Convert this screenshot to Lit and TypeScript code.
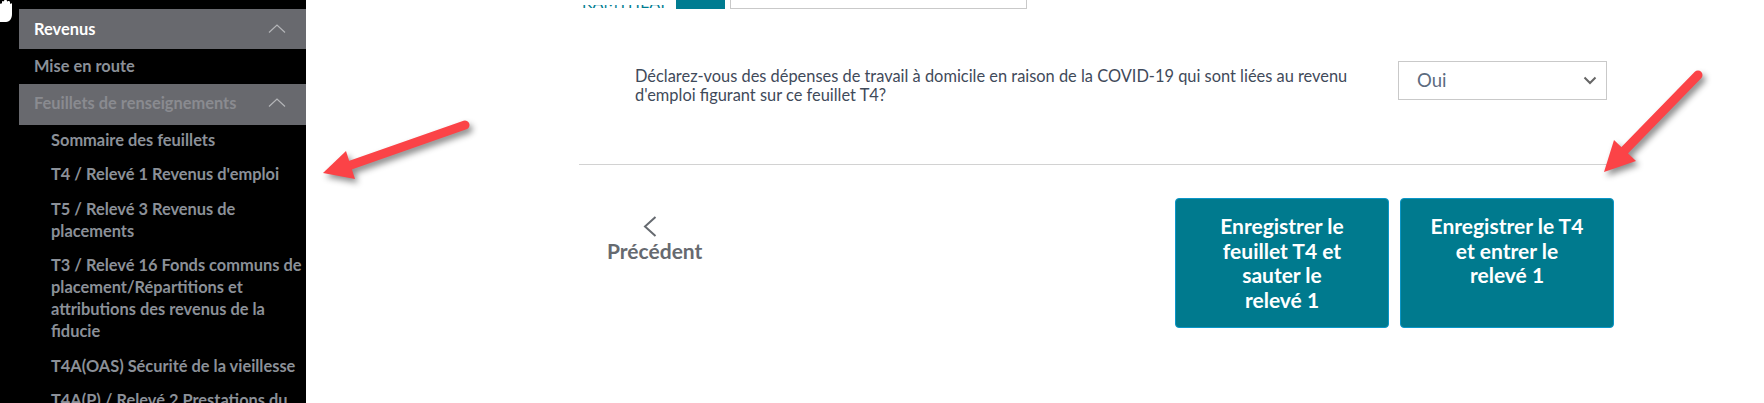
import { LitElement, html, css, svg } from "lit";
import { customElement } from "lit/decorators.js";

@customElement("app-root")
export class AppRoot extends LitElement {
  static styles = css`
    :host {
      display: block;
      position: relative;
      width: 1764px;
      height: 403px;
      overflow: hidden;
      background: #fff;
      font-family: "Lato", "Noto Sans", "Liberation Sans", sans-serif;
    }
    .page { display: flex; height: 403px; }
    .sidebar {
      width: 306px;
      flex: none;
      background: #000;
      padding-top: 9px;
      box-sizing: border-box;
      overflow: hidden;
      font-size: 16.4px;
      font-weight: 700;
      color: #8b9098;
    }
    .head {
      margin-left: 19px;
      height: 40px;
      box-sizing: border-box;
      background: #68696e;
      display: flex;
      align-items: center;
      justify-content: space-between;
      padding: 0 20px 2px 15px;
    }
    .head.first { color: #fff; }
    .head.sub { height: 41px; color: #8a8b90; padding-bottom: 4px; }
    .head svg { display: block; }
    .top { height: 35px; box-sizing: border-box; padding: 0 0 3px 34px; display: flex; align-items: center; }
    .item { padding: 3.5px 0 9px 51px; line-height: 22px; }
    .main { flex: 1; padding-left: 273px; padding-right: 157px; box-sizing: border-box; }
    .crumb { height: 9px; display: flex; align-items: flex-end; overflow: hidden; }
    .crumb .lbl { width: 97px; padding-left: 3px; font-size: 15.500px; line-height: 14px; color: #007c91; height: 4px; overflow: hidden; display: flex; align-items: flex-end; box-sizing: border-box; letter-spacing: 0.4px; }
    .crumb .teal { width: 49px; height: 9px; background: #007c91; }
    .crumb .input { width: 297px; height: 20px; margin-left: 5px; border: 1.5px solid #c9c9c9; box-sizing: border-box; background: #fff; }
    .question { display: flex; justify-content: space-between; margin-top: 52px; padding-left: 56px; }
    .qtext { width: 720px; font-size: 16.4px; line-height: 19px; color: #3f4a5a; padding-top: 5px; }
    .select {
      width: 209px; height: 39px; box-sizing: border-box;
      border: 1px solid #c9c9c9; display: flex; align-items: center; justify-content: space-between;
      padding: 0 9px 2px 18px; font-size: 18.500px; color: #5c6b80;
    }
    .select svg { margin-top: 2px; }
    .rule { height: 1px; background: #d2d2d2; margin-top: 60px; }
    .actions { display: flex; align-items: flex-start; margin-top: 33px; margin-right: -7px; }
    .prev { width: 596px; padding-left: 28px; box-sizing: border-box; display: flex; flex-direction: column; align-items: flex-start; font-size: 21px; font-weight: 700; color: #666a70; }
    .prev svg { display: block; margin: 18px 0 1px 36px; }
    .btn {
      width: 214px; height: 130px; box-sizing: border-box;
      background: #007a8e; border: 1px solid #0a96c8; border-radius: 4px;
      color: #fff; font-size: 21px; font-weight: 700; line-height: 24.6px; text-align: center;
      padding: 15px 20px 0;
    }
    .btn + .btn { margin-left: 11px; }
    .overlay { position: absolute; left: 0; top: 0; pointer-events: none; }
    .arrow { filter: drop-shadow(3px 4px 3px rgba(0,0,0,.45)); }
  `;

  private chev() {
    return html`<svg width="18" height="9" viewBox="0 0 18 9"><path d="M1 8.5 9 1l8 7.5" fill="none" stroke="#b4b5b8" stroke-width="1.2"/></svg>`;
  }

  render() {
    const items = [
      "Sommaire des feuillets",
      "T4 / Relevé 1 Revenus d'emploi",
      "T5 / Relevé 3 Revenus de placements",
      "T3 / Relevé 16 Fonds communs de placement/Répartitions et attributions des revenus de la fiducie",
      "T4A(OAS) Sécurité de la vieillesse",
      "T4A(P) / Relevé 2 Prestations du",
    ];
    return html`
      <div class="page">
        <nav class="sidebar">
          <div class="head first"><span>Revenus</span>${this.chev()}</div>
          <div class="top">Mise en route</div>
          <div class="head sub"><span>Feuillets de renseignements</span>${this.chev()}</div>
          ${items.map((t) => html`<div class="item">${t}</div>`)}
        </nav>
        <main class="main">
          <div class="crumb">
            <div class="lbl">KAMTHEAP</div>
            <div class="teal"></div>
            <div class="input"></div>
          </div>
          <div class="question">
            <div class="qtext">Déclarez-vous des dépenses de travail à domicile en raison de la COVID-19 qui sont liées au revenu d'emploi figurant sur ce feuillet T4?</div>
            <div class="select">
              <span>Oui</span>
              <svg width="14" height="9" viewBox="0 0 14 9"><path d="M1.5 1.5 7 7l5.5-5.5" fill="none" stroke="#666" stroke-width="2"/></svg>
            </div>
          </div>
          <div class="rule"></div>
          <div class="actions">
            <div class="prev">
              <svg width="14" height="21" viewBox="0 0 14 21"><path d="M12.5 1 2 10.5 12.5 20" fill="none" stroke="#666a70" stroke-width="2"/></svg>
              <span>Précédent</span>
            </div>
            <div class="btn">Enregistrer le<br />feuillet T4 et<br />sauter le<br />relevé 1</div>
            <div class="btn">Enregistrer le T4<br />et entrer le<br />relevé 1</div>
          </div>
        </main>
      </div>
      <svg class="overlay" width="1764" height="403" viewBox="0 0 1764 403">
        ${svg`
          <path d="M0 4c1-1 2-1 2 0V2c0-1.500 2-1.500 2 0V1c0-1.500 3-1.500 3 0v1c0-1.500 3-1.500 3 0v2c1-1 2-1 2 0v10c0 4-2 8-6 8H0z" fill="#fff"/>
          <g class="arrow">
            <path d="M465 125 348 166" stroke="#fb4347" stroke-width="9" stroke-linecap="round" fill="none"/>
            <path d="M323 173 346 151 355 179Z" fill="#fb4347"/>
          </g>
          <g class="arrow">
            <path d="M1698 75 1622 153" stroke="#fb4347" stroke-width="9" stroke-linecap="round" fill="none"/>
            <path d="M1604 172 1614 140 1636 161Z" fill="#fb4347"/>
          </g>
        `}
      </svg>
    `;
  }
}
